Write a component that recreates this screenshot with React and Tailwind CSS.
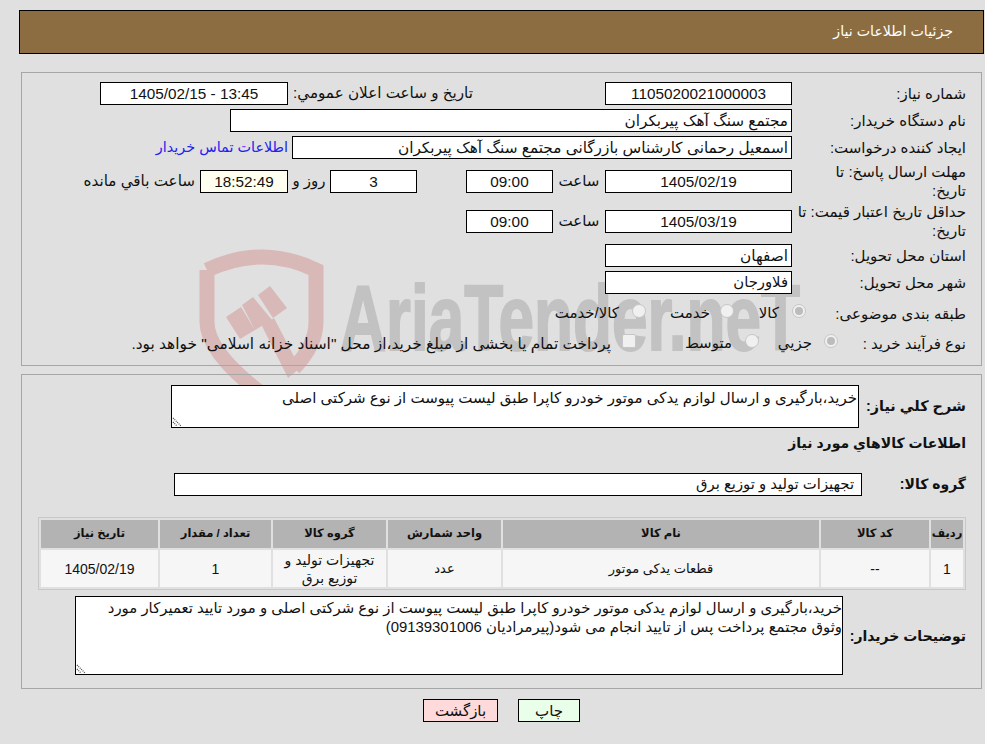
import { useState } from 'react';

const box = 'h-[23px] border border-black flex items-center leading-none';
const field = `${box} text-[15.3px]`;
const stack = { fontFamily: '"Liberation Sans", "DejaVu Sans", sans-serif' };

// sits under the form, the white inputs cover parts of it
function Watermark() {
  return (
    <svg className="absolute left-0 top-0 pointer-events-none" width="985" height="744" viewBox="0 0 985 744">
      <path d="M207 270 Q262 244 316 270 V322 Q316 345 294 368 M207 270 V322 Q207 352 262 394" fill="none" stroke="#d9b8b8" strokeWidth="15" />
      <path fill="#d9b8b8" d="M226 317 L241 307 L255 330 L240 339 Z M242 305 L253 297 L272 320 L255 330 Z M258 295 L270 286 L287 308 L273 318 Z M262 326 L274 318 L300 368 L288 378 Z" />
      <text x="340" y="350" direction="ltr" fill="#c2c2c2" stroke="#c2c2c2" strokeWidth="2" style={{ fontFamily: '"Liberation Sans", sans-serif' }} fontWeight="700" fontSize="92" textLength="460" lengthAdjust="spacingAndGlyphs">AriaTender.neT</text>
    </svg>
  );
}

function Label({ children, className = 'w-[174px]' }) {
  return <div className={`${className} shrink-0 whitespace-nowrap text-[15px] leading-[19px] text-[#111]`}>{children}</div>;
}

function Radio({ checked }) {
  return (
    <span className="w-[14px] h-[14px] -mt-[4px] rounded-full border border-[#c6c6c6] bg-[#f0f0f0] flex items-center justify-center shrink-0">
      {checked && <span className="w-[8px] h-[8px] rounded-full bg-[#bcbcbc]" />}
    </span>
  );
}

function Grip() {
  return (
    <svg className="absolute left-0 bottom-0" width="11" height="11" viewBox="0 0 11 11">
      <path d="M1 2 L9 10 M1 6 L5 10" stroke="#444" strokeWidth="1.2" strokeDasharray="1 1" fill="none" />
    </svg>
  );
}

const heads = [
  ['ردیف', 'w-[32px]'],
  ['کد کالا', 'w-[108px]'],
  ['نام کالا', 'w-[316px]'],
  ['واحد شمارش', 'w-[113px]'],
  ['گروه کالا', 'w-[113px]'],
  ['تعداد / مقدار', 'w-[111px]'],
  ['تاریخ نیاز', 'w-[117px]'],
];
const cells = [
  ['1', 'text-[14px]'],
  ['--', 'text-[14px]'],
  ['قطعات یدکی موتور', 'text-[13px]'],
  ['عدد', 'text-[13px]'],
  ['تجهیزات تولید و توزیع برق', 'text-[14px]'],
  ['1', 'text-[14px]'],
  ['1405/02/19', 'text-[14px]'],
];

export default function App() {
  const [kind, setKind] = useState('کالا');

  return (
    <div dir="rtl" style={stack} className="relative w-[985px] h-[744px] overflow-hidden bg-[#e0e0e0] text-[15px] text-[#111]">
      <Watermark />

      <div className="relative pt-[10px] pl-[19px] pr-px">
        <div className="h-[44px] bg-[#8c6d42] border border-black flex items-center pr-[30px] text-white text-[14.2px]">جزئیات اطلاعات نیاز</div>
      </div>

      <div className="relative mt-[18px] ml-[21px] mr-[3px] h-[294px] border border-[#a6a6a6] pr-[15px] pt-[9px]">
        <div className="flex h-[23px] items-center">
          <Label>شماره نیاز:</Label>
          <div className={`${field} bg-white w-[187px] justify-center`}>1105020021000003</div>
          <div className="w-[317px] flex justify-end">
            <span className="pl-[5px] whitespace-nowrap text-[15.2px]">تاریخ و ساعت اعلان عمومي:</span>
          </div>
          <div className={`${field} bg-white w-[188px] justify-center`}>13:45 - 1405/02/15</div>
        </div>

        <div className="flex h-[23px] items-center mt-[4px]">
          <Label>نام دستگاه خریدار:</Label>
          <div className={`${field} bg-white w-[562px] pr-[3px]`}>مجتمع سنگ آهک پیربکران</div>
        </div>

        <div className="flex h-[23px] items-center mt-[4px]">
          <Label>ایجاد کننده درخواست:</Label>
          <div className={`${field} bg-white w-[500px] pr-[3px]`}>اسمعیل رحمانی کارشناس بازرگانی مجتمع سنگ آهک پیربکران</div>
          <a className="text-[#2222ee] mr-[4px] whitespace-nowrap text-[14.4px]">اطلاعات تماس خریدار</a>
        </div>

        <div className="flex h-[40px] mt-[3px]">
          <Label>مهلت ارسال پاسخ: تا<br />تاریخ:</Label>
          <div className="flex items-center h-[23px] mt-[8px]">
            <div className={`${field} bg-white w-[187px] justify-center`}>1405/02/19</div>
            <span className="w-[52px] text-center">ساعت</span>
            <div className={`${field} bg-white w-[87px] justify-center`}>09:00</div>
            <div className="w-[49px]" />
            <div className={`${field} bg-white w-[87px] justify-center`}>3</div>
            <span className="w-[42px] text-center whitespace-nowrap">روز و</span>
            <div className={`${field} bg-[#fffff0] w-[88px] justify-center`}>18:52:49</div>
            <span className="mr-[5px] whitespace-nowrap text-[15.2px]">ساعت باقي مانده</span>
          </div>
        </div>

        <div className="flex h-[40px]">
          <Label>حداقل تاریخ اعتبار قیمت: تا<br />تاریخ:</Label>
          <div className="flex items-center h-[23px] mt-[8px]">
            <div className={`${field} bg-white w-[187px] justify-center`}>1405/03/19</div>
            <span className="w-[52px] text-center">ساعت</span>
            <div className={`${field} bg-white w-[87px] justify-center`}>09:00</div>
          </div>
        </div>

        <div className="flex h-[23px] items-center mt-[2px]">
          <Label>استان محل تحویل:</Label>
          <div className={`${field} bg-white w-[187px] pr-[3px]`}>اصفهان</div>
        </div>

        <div className="flex h-[23px] items-center mt-[4px]">
          <Label>شهر محل تحویل:</Label>
          <div className={`${box} text-[14.8px] bg-white w-[187px] pr-[3px]`}>فلاورجان</div>
        </div>

        <div className="flex h-[22px] items-center mt-[8px]">
          <Label className="w-[160px]">طبقه بندی موضوعی:</Label>
          <div className="flex items-center">
            {['کالا', 'خدمت', 'کالا/خدمت'].map((k, i) => (
              <label key={k} onClick={() => setKind(k)} className={`flex items-center ${i === 1 ? 'gap-[10px]' : 'gap-[13px]'} ${i === 0 ? 'w-[72px]' : 'w-[88px]'}`}>
                <Radio checked={kind === k} />
                <span className="whitespace-nowrap mt-[1px]">{k}</span>
              </label>
            ))}
          </div>
        </div>

        <div className="flex h-[22px] items-center mt-[8px]">
          <Label className="w-[128px]">نوع فرآیند خرید :</Label>
          <div className="flex items-center">
            <span className="flex items-center gap-[12px] w-[79px]"><Radio checked /><span className="mt-[1px]">جزيي</span></span>
            <span className="flex items-center gap-[13px] w-[123px]"><Radio /><span className="mt-[1px]">متوسط</span></span>
            <span className="flex items-center gap-[11px]">
              <span className="w-[14px] h-[14px] -mt-[4px] rounded-[2px] border border-[#c6c6c6] bg-[#f0f0f0] shrink-0" />
              <span className="whitespace-nowrap mt-[1px] text-[15.4px]">پرداخت تمام یا بخشی از مبلغ خرید،از محل "اسناد خزانه اسلامی" خواهد بود.</span>
            </span>
          </div>
        </div>
      </div>

      <div className="relative mt-[8px] ml-[21px] mr-[3px] h-[315px] border border-[#a6a6a6] pr-[15px]">
        <div className="flex mt-[10px] h-[43px]">
          <div className="w-[107px] shrink-0 font-bold text-[14.4px] leading-[43px] whitespace-nowrap">شرح کلي نیاز:</div>
          <div className="relative w-[688px] h-[43px] border border-black bg-white pr-[1px] pt-[2px] text-[15px] leading-[20px]">
            خرید،بارگیری و ارسال لوازم یدکی موتور خودرو کاپرا طبق لیست پیوست از نوع شرکتی اصلی
            <Grip />
          </div>
        </div>

        <div className="font-bold text-[14px] mt-[4px] h-[22px] leading-[22px]">اطلاعات کالاهاي مورد نیاز</div>

        <div className="flex items-center mt-[19px] h-[23px]">
          <div className="w-[104px] shrink-0 font-bold text-[14px] whitespace-nowrap">گروه کالا:</div>
          <div className={`${box} text-[14.8px] bg-white w-[688px] pr-[7px]`}>تجهیزات تولید و توزیع برق</div>
        </div>

        <div className="mt-[21px] border border-[#c8c8c8] p-[2px] w-[928px]">
          <div className="flex gap-[2px] h-[28px]">
            {heads.map(([h, w]) => (
              <div key={h} className={`${w} shrink-0 bg-[#b3b3b3] flex items-center justify-center font-bold text-[11.5px] whitespace-nowrap`}>{h}</div>
            ))}
          </div>
          <div className="flex gap-[2px] h-[37px] mt-[2px]">
            {cells.map(([c, size], i) => (
              <div key={i} className={`${heads[i][1]} ${size} shrink-0 bg-[#f6f6f6] flex items-center justify-center text-center leading-[18px] px-[6px]`}>{c}</div>
            ))}
          </div>
        </div>

        <div className="flex mt-[6px]">
          <div className="w-[123px] shrink-0 font-bold text-[14px] leading-[80px] whitespace-nowrap">توضیحات خریدار:</div>
          <div className="relative w-[768px] h-[79px] border border-black bg-white pt-[2px] text-[14.9px] leading-[19px] whitespace-nowrap">
            خرید،بارگیری و ارسال لوازم یدکی موتور خودرو کاپرا طبق لیست پیوست از نوع شرکتی اصلی و مورد تایید تعمیرکار مورد<br />
            وثوق مجتمع پرداخت پس از تایید انجام می شود(پیرمرادیان 09139301006)
            <Grip />
          </div>
        </div>
      </div>

      <div className="relative flex justify-center gap-[20px] mt-[10px] pl-[18px]">
        <button className="w-[62px] h-[23px] border border-black bg-[#eaffea] text-[15px]">چاپ</button>
        <button className="w-[75px] h-[23px] border border-black bg-[#ffdada] text-[15px]">بازگشت</button>
      </div>
    </div>
  );
}
